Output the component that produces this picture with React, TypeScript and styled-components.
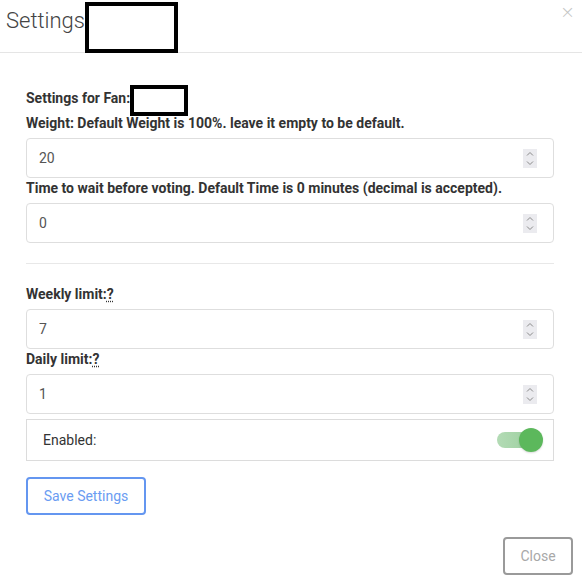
import React from "react";
import styled, { createGlobalStyle } from "styled-components";

const Global = createGlobalStyle`
  html, body { margin: 0; padding: 0; background: #fff; }
  body { font-family: Roboto, "Liberation Sans", Arial, sans-serif; color: #333; }
  * { box-sizing: border-box; }
`;

const Modal = styled.div`
  width: 582px;
  height: 581px;
  display: flex;
  flex-direction: column;
  background: #fff;
`;

const Header = styled.div`
  height: 53px;
  flex: none;
  display: flex;
  align-items: flex-start;
  border-bottom: 1px solid #e5e5e5;
  padding-left: 6px;
`;

const Title = styled.h4`
  margin: 8px 0 0;
  font-size: 22px;
  font-weight: 300;
  line-height: 26px;
  color: #444;
`;

const TitleRedaction = styled.span`
  display: block;
  width: 93px;
  height: 51px;
  margin-top: 2px;
  border: 4px solid #000;
  background: #fff;
`;

const CloseX = styled.button`
  margin: 0 7px 0 auto;
  padding: 0;
  border: none;
  background: none;
  font-family: "DejaVu Sans", sans-serif;
  font-size: 18px;
  font-weight: 300;
  line-height: 24px;
  color: #c4c4c4;
  cursor: pointer;
`;

const Body = styled.div`
  padding: 35px 28px 0 26px;
  display: flex;
  flex-direction: column;
`;

const Label = styled.label<{ $gap?: number }>`
  display: block;
  font-size: 14px;
  font-weight: 700;
  line-height: 20px;
  color: #333;
  margin-bottom: ${(p) => (p.$gap ?? 5)}px;
`;

const InlineRedaction = styled.span`
  display: inline-block;
  vertical-align: top;
  width: 58px;
  height: 31px;
  margin: -3px 0 -8px 0;
  border: 4px solid #000;
  background: #fff;
`;

const Help = styled.abbr`
  text-decoration: underline dotted;
  text-underline-offset: 2px;
  cursor: help;
`;

const Field = styled.div`
  display: flex;
  align-items: center;
  height: 40px;
  border: 1px solid #dedede;
  border-radius: 4px;
  background: #fff;
`;

const Input = styled.input`
  flex: 1;
  min-width: 0;
  height: 100%;
  border: none;
  outline: none;
  background: transparent;
  padding: 0 12px;
  font-family: Roboto, "Liberation Sans", Arial, sans-serif;
  font-size: 14px;
  color: #555;
`;

const Spinner = styled.span`
  flex: none;
  width: 14px;
  height: 19px;
  margin-right: 16px;
  background: #ebebef;
  display: flex;
`;

const Divider = styled.hr`
  border: none;
  border-top: 1px solid #e8e8e8;
  margin: 20px 0;
`;

const ToggleRow = styled.div`
  margin-top: 5px;
  height: 42px;
  border: 1px solid #dcdcdc;
  display: flex;
  align-items: center;
  justify-content: space-between;
  padding: 0 10px 0 16px;
  font-size: 14px;
  color: #333;
`;

const Toggle = styled.span`
  position: relative;
  width: 46px;
  height: 24px;
  flex: none;
`;

const Track = styled.span`
  position: absolute;
  left: 0;
  top: 4px;
  width: 42px;
  height: 16px;
  border-radius: 8px;
  background: linear-gradient(90deg, #b3dbb5, #98cd9b);
`;

const Knob = styled.span`
  position: absolute;
  right: 0;
  top: 0;
  width: 24px;
  height: 24px;
  border-radius: 50%;
  background: #5cb85c;
  box-shadow: 0 1px 2px rgba(0, 0, 0, 0.15);
`;

const Button = styled.button<{ $variant: "primary" | "muted" }>`
  height: 38px;
  padding: 0;
  white-space: nowrap;
  border-radius: 4px;
  background: #fff;
  font-family: Roboto, "Liberation Sans", Arial, sans-serif;
  font-size: 14px;
  cursor: pointer;
  border: 2px solid ${(p) => (p.$variant === "primary" ? "#6496f0" : "#9a9a9a")};
  color: ${(p) => (p.$variant === "primary" ? "#6a9cf2" : "#a8a8a8")};
`;

const SaveWrap = styled.div`
  margin-top: 16px;
`;

const SaveButton = styled(Button)`
  width: 120px;
`;

const Footer = styled.div`
  margin-top: 22px;
  display: flex;
  justify-content: flex-end;
  padding-right: 9px;
`;

const CloseButton = styled(Button)`
  width: 70px;
`;

const SpinIcon = () => (
  <svg width="14" height="19" viewBox="0 0 14 19">
    <path d="M4 6.5 L7 3.5 L10 6.5" fill="none" stroke="#8a8a8a" strokeWidth="1" />
    <path d="M4 12.5 L7 15.5 L10 12.5" fill="none" stroke="#8a8a8a" strokeWidth="1" />
  </svg>
);

const NumberField = ({ value }: { value: string }) => (
  <Field>
    <Input type="text" defaultValue={value} />
    <Spinner>
      <SpinIcon />
    </Spinner>
  </Field>
);

export default function App() {
  return (
    <>
      <Global />
      <Modal>
        <Header>
          <Title>Settings</Title>
          <TitleRedaction />
          <CloseX aria-label="close">×</CloseX>
        </Header>
        <Body>
          <Label>
            Settings for Fan:<InlineRedaction />
          </Label>
          <Label>Weight: Default Weight is 100%. leave it empty to be default.</Label>
          <NumberField value="20" />
          <Label>Time to wait before voting. Default Time is 0 minutes (decimal is accepted).</Label>
          <NumberField value="0" />
          <Divider />
          <Label>
            Weekly limit:<Help title="Weekly limit">?</Help>
          </Label>
          <NumberField value="7" />
          <Label>
            Daily limit:<Help title="Daily limit">?</Help>
          </Label>
          <NumberField value="1" />
          <ToggleRow>
            <span>Enabled:</span>
            <Toggle>
              <Track />
              <Knob />
            </Toggle>
          </ToggleRow>
          <SaveWrap>
            <SaveButton $variant="primary">Save Settings</SaveButton>
          </SaveWrap>
        </Body>
        <Footer>
          <CloseButton $variant="muted">Close</CloseButton>
        </Footer>
      </Modal>
    </>
  );
}
